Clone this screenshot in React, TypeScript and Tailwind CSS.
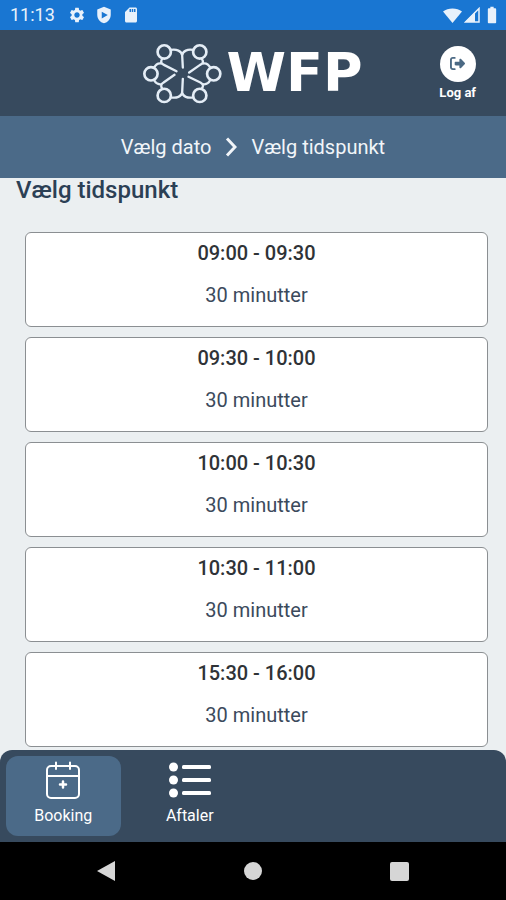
import React from "react";
import { MdBatteryFull, MdSdCard, MdSettings } from "react-icons/md";
import { FaRightFromBracket } from "react-icons/fa6";

const slots: string[] = [
  "09:00 - 09:30",
  "09:30 - 10:00",
  "10:00 - 10:30",
  "10:30 - 11:00",
  "15:30 - 16:00",
];

function ShieldIcon() {
  return (
    <svg viewBox="0 0 24 24" className="size-[18px]" fill="currentColor" aria-hidden="true">
      <path
        fillRule="evenodd"
        d="M12 1 3 4.500v7C3 17 6.800 21.600 12 23c5.200-1.400 9-6 9-11.500v-7L12 1Zm-3 6.500 8 4.500-8 4.500V7.500Z"
      />
    </svg>
  );
}

function WifiIcon() {
  return (
    <svg viewBox="0 0 19 15" className="h-[15px] w-[19px]" fill="currentColor" aria-hidden="true">
      <path d="M0 3.500C5 -.5 14 -.5 19 3.500L9.500 15Z" />
    </svg>
  );
}

function SignalIcon() {
  return (
    <svg viewBox="0 0 16 16" className="size-4" aria-hidden="true">
      <path d="M15 1.500V15H1.500Z" fill="none" stroke="currentColor" strokeWidth="1.500" />
      <path d="M11 5V15H1Z" fill="currentColor" />
    </svg>
  );
}

function Emblem() {
  return (
    <svg
      viewBox="17 20 238 182"
      className="h-[61px] w-[79px]"
      fill="none"
      stroke="#e4edf6"
      strokeWidth="8"
      strokeLinecap="round"
      strokeLinejoin="round"
      aria-hidden="true"
    >
      <circle cx="81" cy="46" r="20" />
      <circle cx="188" cy="46" r="20" />
      <circle cx="41" cy="112" r="20" />
      <circle cx="230" cy="112" r="20" />
      <circle cx="81" cy="177" r="20" />
      <circle cx="188" cy="177" r="20" />
      <g strokeWidth="7">
        <path d="M101 40C118 37 133 43 135 56C137 43 151 37 168 40M135 56L137 93" />
        <path d="M101 183C118 186 133 181 135 168C137 181 151 186 168 183M135 168L137 127" />
        <path d="M75 66C69 77 72 81 80 85L118 104M50 94C56 82 64 79 73 81" />
        <path d="M194 66C201 77 197 81 189 85L156 108M220 94C214 82 206 79 197 81" />
        <path d="M75 157C69 147 72 142 79 138L112 115M50 130C56 142 64 145 73 143" />
        <path d="M194 157C201 147 197 142 190 138L154 121M220 130C214 142 206 145 197 143" />
      </g>
    </svg>
  );
}

function CalendarIcon() {
  return (
    <svg
      viewBox="0 0 34 38"
      className="h-[38px] w-[34px]"
      fill="none"
      stroke="currentColor"
      strokeWidth="2"
      strokeLinecap="round"
      aria-hidden="true"
    >
      <rect x="1" y="5" width="32" height="32" rx="4" />
      <path d="M1 15H33M10 1.500V8M24 1.500V8" />
      <path d="M17 20.500V26.500M14 23.500H20" strokeWidth="2.500" />
    </svg>
  );
}

function ListIcon() {
  return (
    <svg viewBox="0 0 42 38" className="h-[38px] w-[42px]" fill="currentColor" aria-hidden="true">
      <circle cx="4.500" cy="6" r="4.500" />
      <circle cx="4.500" cy="19" r="4.500" />
      <circle cx="4.500" cy="32" r="4.500" />
      <rect x="13" y="4" width="29" height="4" rx="1.500" />
      <rect x="13" y="17" width="29" height="4" rx="1.500" />
      <rect x="13" y="30" width="29" height="4" rx="1.500" />
    </svg>
  );
}

function Slot({ time }: { time: string }) {
  return (
    <li>
      <button
        type="button"
        className="flex h-[95px] w-full flex-col items-center gap-[18px] rounded-md border border-[#8b8f92] bg-white pt-2 text-xl leading-6"
      >
        <span className="font-medium text-[#2f3337]">{time}</span>
        <span className="text-[#3b4a5c]">30 minutter</span>
      </button>
    </li>
  );
}

export default function App() {
  return (
    <div className="flex min-h-screen flex-col bg-[#ebeff1] font-['Roboto',sans-serif]">
      <div className="flex h-[30px] shrink-0 items-center justify-between bg-[#1976d2] pr-1 pl-[10px] text-[#e8f1fb]">
        <div className="flex items-center gap-[9px]">
          <span className="mr-1 text-lg leading-6">11:13</span>
          <MdSettings className="size-[18px]" />
          <ShieldIcon />
          <MdSdCard className="size-[18px]" />
        </div>
        <div className="flex items-center gap-[2px]">
          <WifiIcon />
          <SignalIcon />
          <MdBatteryFull className="size-5" />
        </div>
      </div>

      <header className="grid h-[86px] shrink-0 grid-cols-[1fr_auto_1fr] items-center bg-[#374a5e] text-white">
        <div className="col-start-2 flex items-center gap-1">
          <Emblem />
          <span className="font-['DejaVu_Sans',sans-serif] text-[54px] leading-[60px] font-bold">WFP</span>
        </div>
        <div className="flex justify-end pr-[30px]">
          <button type="button" className="flex flex-col items-center gap-[3px] text-[13px] leading-4 font-bold">
            <span className="flex size-9 items-center justify-center rounded-full bg-white text-[#4b6984]">
              <FaRightFromBracket className="size-[15px]" />
            </span>
            Log af
          </button>
        </div>
      </header>

      <nav
        aria-label="Trin"
        className="flex h-[62px] shrink-0 items-center justify-center gap-[14px] bg-[#4b6a88] text-xl leading-6 text-[#f1f5f9]"
      >
        <a href="#dato">Vælg dato</a>
        <svg viewBox="0 0 12 20" className="h-5 w-3" fill="none" stroke="currentColor" strokeWidth="3" aria-hidden="true">
          <path d="M2 1.500 10 10 2 18.500" />
        </svg>
        <a href="#tidspunkt" aria-current="step">Vælg tidspunkt</a>
      </nav>

      <main className="flex-1">
        <h1 className="px-4 text-2xl leading-6 font-medium text-[#2b4055]">Vælg tidspunkt</h1>
        <ul className="mt-[30px] flex flex-col gap-[10px] pr-[18px] pl-[25px]">
          {slots.map((time) => (
            <Slot key={time} time={time} />
          ))}
        </ul>
      </main>

      <nav
        aria-label="Menu"
        className="grid h-[92px] shrink-0 grid-cols-4 items-center rounded-t-xl bg-[#374a5e] text-base leading-5 text-white"
      >
        <a href="#booking" className="mx-[6px] flex h-20 flex-col items-center gap-[7px] rounded-xl bg-[#4b6a88] pt-[5px]">
          <CalendarIcon />
          Booking
        </a>
        <a href="#aftaler" className="mx-[6px] flex h-20 flex-col items-center gap-[7px] rounded-xl pt-[5px]">
          <ListIcon />
          Aftaler
        </a>
      </nav>

      <div className="grid h-[58px] shrink-0 grid-cols-3 place-items-center bg-black px-[33px] text-[#d6d6d6]">
        <button type="button" aria-label="Tilbage">
          <svg viewBox="0 0 18 20" className="h-5 w-[18px]" fill="currentColor" aria-hidden="true">
            <path d="M0 10 18 0V20Z" />
          </svg>
        </button>
        <button type="button" aria-label="Hjem" className="size-[18px] rounded-full bg-current" />
        <button type="button" aria-label="Oversigt" className="size-[19px] rounded-xs bg-current" />
      </div>
    </div>
  );
}
